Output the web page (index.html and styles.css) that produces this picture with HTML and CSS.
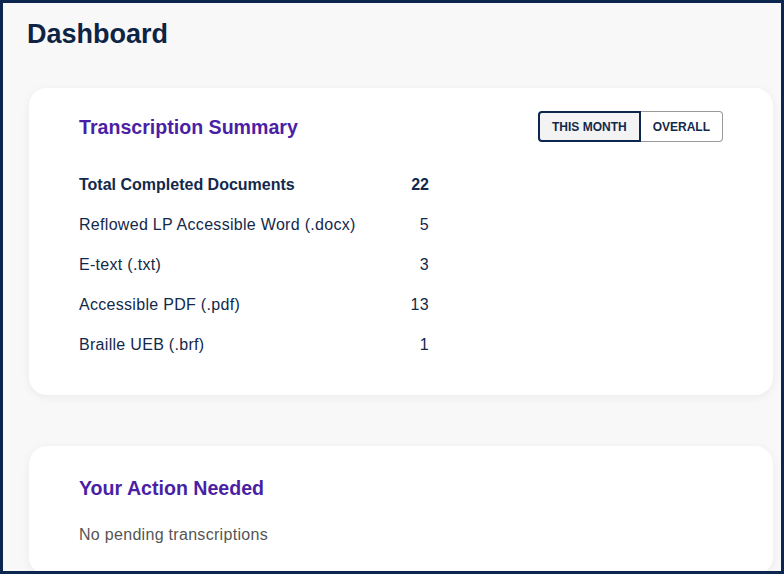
FILE: index.html
```html
<!DOCTYPE html>
<html lang="en">
<head>
  <meta charset="UTF-8">
  <meta name="viewport" content="width=device-width, initial-scale=1.0">
  <title>Dashboard</title>
  <link rel="stylesheet" href="styles.css">
</head>
<body>
  <div class="frame">
    <h1 class="page-title">Dashboard</h1>

    <section class="card summary">
      <div class="card-header">
        <h2 class="card-title">Transcription Summary</h2>
        <div class="toggle">
          <button class="toggle-btn active">This Month</button>
          <button class="toggle-btn">Overall</button>
        </div>
      </div>
      <table class="summary-table">
        <tr class="total">
          <td>Total Completed Documents</td>
          <td class="num">22</td>
        </tr>
        <tr>
          <td>Reflowed LP Accessible Word (.docx)</td>
          <td class="num">5</td>
        </tr>
        <tr>
          <td>E-text (.txt)</td>
          <td class="num">3</td>
        </tr>
        <tr>
          <td>Accessible PDF (.pdf)</td>
          <td class="num">13</td>
        </tr>
        <tr>
          <td>Braille UEB (.brf)</td>
          <td class="num">1</td>
        </tr>
      </table>
    </section>

    <section class="card action">
      <h2 class="card-title">Your Action Needed</h2>
      <p class="empty">No pending transcriptions</p>
    </section>
  </div>
</body>
</html>
```

FILE: styles.css
```css
html, body {
  margin: 0;
  padding: 0;
}
body {
  font-family: "Liberation Sans", Arial, sans-serif;
  color: #13294b;
}
.frame {
  box-sizing: border-box;
  height: 574px;
  overflow: hidden;
  border: 3px solid #0c2650;
  background: #f8f8f8;
  padding: 0 8px 0 26px;
}
.page-title {
  margin: 15px 0 0 -2px;
  font-size: 27px;
  line-height: 32px;
  font-weight: bold;
  color: #0f2444;
}
.card {
  background: #fff;
  border-radius: 18px;
  box-shadow: 0 2px 10px rgba(0,0,0,0.06);
  padding: 23px 50px 31px;
}
.summary {
  margin-top: 38px;
}
.action {
  margin-top: 51px;
  padding-top: 30px;
}
.card-header {
  display: flex;
  justify-content: space-between;
  align-items: center;
}
.card-title {
  margin: 0;
  font-size: 19.6px;
  line-height: 24px;
  font-weight: bold;
  color: #4a1fa6;
}
.toggle {
  display: flex;
}
.toggle-btn {
  font-family: inherit;
  font-size: 12px;
  font-weight: bold;
  text-transform: uppercase;
  color: #13294b;
  background: #fff;
  border: 1px solid #9a9a9a;
  height: 31px;
  padding: 0 12px;
  cursor: pointer;
}
.toggle-btn:first-child {
  border-radius: 4px 0 0 4px;
}
.toggle-btn:last-child {
  border-left: none;
  border-radius: 0 4px 4px 0;
}
.toggle-btn.active {
  background: #f3f3f3;
  border: 2px solid #0c2650;
}
.summary-table {
  margin-top: 23px;
  margin-bottom: -1px;
  width: 350px;
  border-collapse: collapse;
  font-size: 16px;
  letter-spacing: 0.3px;
}
.summary-table td {
  height: 40px;
  padding: 0;
}
.summary-table .num {
  text-align: right;
}
.summary-table .total td {
  font-weight: bold;
  letter-spacing: 0;
}
.empty {
  margin: 26px 0 0;
  font-size: 16px;
  letter-spacing: 0.3px;
  color: #555;
}
```
